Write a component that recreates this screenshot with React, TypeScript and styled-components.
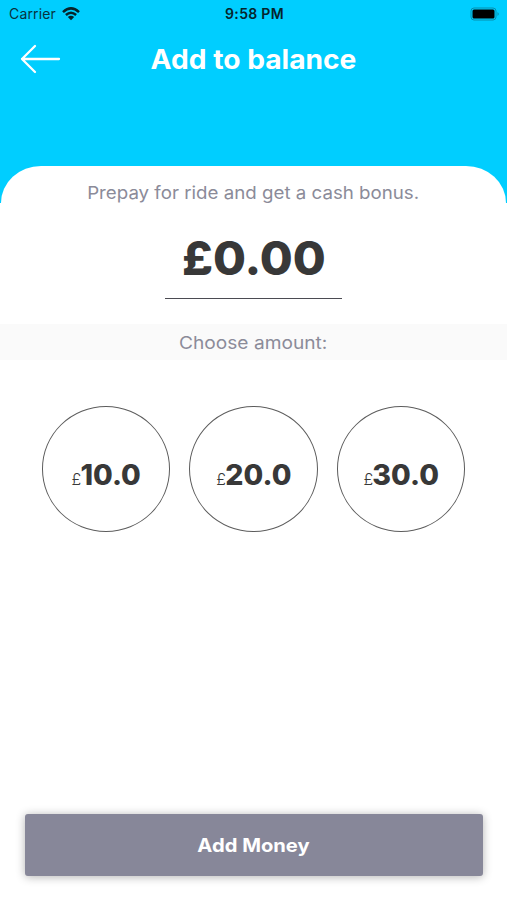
import React from "react";
import styled, { createGlobalStyle } from "styled-components";

const GlobalStyle = createGlobalStyle`
  * { box-sizing: border-box; }
  body { margin: 0; background: #fff; font-family: Inter, "Liberation Sans", sans-serif; }
  button { font-family: inherit; padding: 0; border: 0; background: none; }
`;

const Screen = styled.div`
  width: 507px;
  height: 900px;
  display: flex;
  flex-direction: column;
  overflow: hidden;
  background: #fff;
`;

const Hero = styled.header`
  height: 203px;
  display: flex;
  flex-direction: column;
  justify-content: space-between;
  background: #00ceff;
`;

const StatusBar = styled.div`
  height: 28px;
  padding: 0 7px 0 9px;
  display: grid;
  grid-template-columns: 1fr auto 1fr;
  align-items: center;
  color: #06242c;
`;

const Network = styled.div`
  display: flex;
  align-items: center;
  gap: 6px;
`;

const Battery = styled.svg`
  justify-self: end;
`;

const NavBar = styled.nav`
  height: 62px;
  padding: 0 20px;
  margin-bottom: 76px;
  display: grid;
  grid-template-columns: 42px 1fr 42px;
  align-items: center;
`;

const BackButton = styled.button`
  width: 42px;
  height: 32px;
  display: flex;
`;

interface LabelProps {
  $size: number;
  $weight: number;
  $color: string;
  $stretch?: number;
  $spacing?: number;
}

const Label = styled.span<LabelProps>`
  display: block;
  margin: 0;
  font-size: ${(p) => p.$size}px;
  line-height: 1.2;
  font-weight: ${(p) => p.$weight};
  color: ${(p) => p.$color};
  letter-spacing: ${(p) => p.$spacing ?? 0}px;
  transform: scaleX(${(p) => p.$stretch ?? 1});
  white-space: nowrap;
  text-align: center;
`;

const Title = styled(Label)`
  padding-top: 1px;
`;

const SheetTop = styled.div`
  height: 37px;
  margin: 0 1px;
  border-radius: 40px 40px 0 0 / 37px 37px 0 0;
  background: #fff;
  display: flex;
  justify-content: center;
  padding-top: 16px;
`;

const Balance = styled.section`
  height: 121px;
  display: flex;
  flex-direction: column;
  align-items: center;
  padding-top: 27px;
`;

const Amount = styled.div`
  width: 177px;
  height: 69px;
  border-bottom: 1.5px solid #4b4b52;
  display: flex;
  justify-content: center;
`;

const SectionTitle = styled.h2`
  margin: 0;
  height: 36px;
  padding-top: 1px;
  background: #fafafa;
  display: flex;
  align-items: center;
  justify-content: center;
`;

const Choices = styled.div`
  flex: 1;
  padding-top: 46px;
  display: flex;
  align-items: flex-start;
  justify-content: center;
  gap: 19px;
`;

const Choice = styled.button`
  width: 128.5px;
  height: 126px;
  border: 1.5px solid #5c5c5c;
  border-radius: 50%;
  display: flex;
  align-items: baseline;
  justify-content: center;
  padding-top: 52px;
  color: #383838;
`;

const Footer = styled.footer`
  padding: 0 24px 24px 25px;
`;

const AddButton = styled.button`
  width: 100%;
  height: 62px;
  border-radius: 3px;
  background: #878799;
  box-shadow: 0 1px 10px rgba(0, 0, 0, 0.3);
  display: flex;
  align-items: center;
  justify-content: center;
`;

const amounts = ["10.0", "20.0", "30.0"];

export default function App() {
  return (
    <>
      <GlobalStyle />
      <Screen>
        <Hero>
          <StatusBar>
            <Network>
              <Label $size={14} $weight={400} $color="#08333e" $spacing={0.15}>Carrier</Label>
              <svg width="18" height="14" viewBox="0 0 18 14" fill="none" stroke="#06242c" strokeWidth="2.5">
                <path d="M1 5.1Q9-2.3 17 5.1M3.9 8Q9 3.4 14.1 8" />
                <path d="M5.8 10Q9 7.3 12.2 10L9 13.3Z" fill="#06242c" stroke="none" />
              </svg>
            </Network>
            <Label $size={14} $weight={600} $color="#06242c" $spacing={0.3}>9:58 PM</Label>
            <Battery width="30" height="14" viewBox="0 0 30 14">
              <rect x="1" y="1" width="25" height="12" rx="3" fill="none" stroke="#078ead" />
              <rect x="2.5" y="2.5" width="22" height="9" rx="1.5" fill="#000" />
              <path d="M27.5 5Q30 7 27.5 9Z" fill="#078ead" />
            </Battery>
          </StatusBar>
          <NavBar>
            <BackButton aria-label="Back">
              <svg width="42" height="32" viewBox="0 0 42 32" fill="none" stroke="#fff" strokeWidth="2.3" strokeLinecap="round" strokeLinejoin="round">
                <path d="M39 16H2M15 3L2 16L15 29" />
              </svg>
            </BackButton>
            <Title as="h1" $size={26.5} $weight={700} $color="#fff" $stretch={1.063}>Add to balance</Title>
          </NavBar>
          <SheetTop>
            <Label $size={17.6} $weight={400} $color="#8b8b99" $stretch={1.063}>Prepay for ride and get a cash bonus.</Label>
          </SheetTop>
        </Hero>
        <Balance>
          <Amount>
            <Label $size={47} $weight={800} $color="#383838" $stretch={1.015}>£0.00</Label>
          </Amount>
        </Balance>
        <SectionTitle>
          <Label $size={17.6} $weight={400} $color="#8b8b99" $stretch={1.088}>Choose amount:</Label>
        </SectionTitle>
        <Choices>
          {amounts.map((value) => (
            <Choice key={value}>
              <Label $size={16} $weight={300} $color="#383838">£</Label>
              <Label $size={28} $weight={800} $color="#383838" $stretch={1.02}>{value}</Label>
            </Choice>
          ))}
        </Choices>
        <Footer>
          <AddButton>
            <Label $size={18.5} $weight={700} $color="#fff" $stretch={1.09}>Add Money</Label>
          </AddButton>
        </Footer>
      </Screen>
    </>
  );
}
